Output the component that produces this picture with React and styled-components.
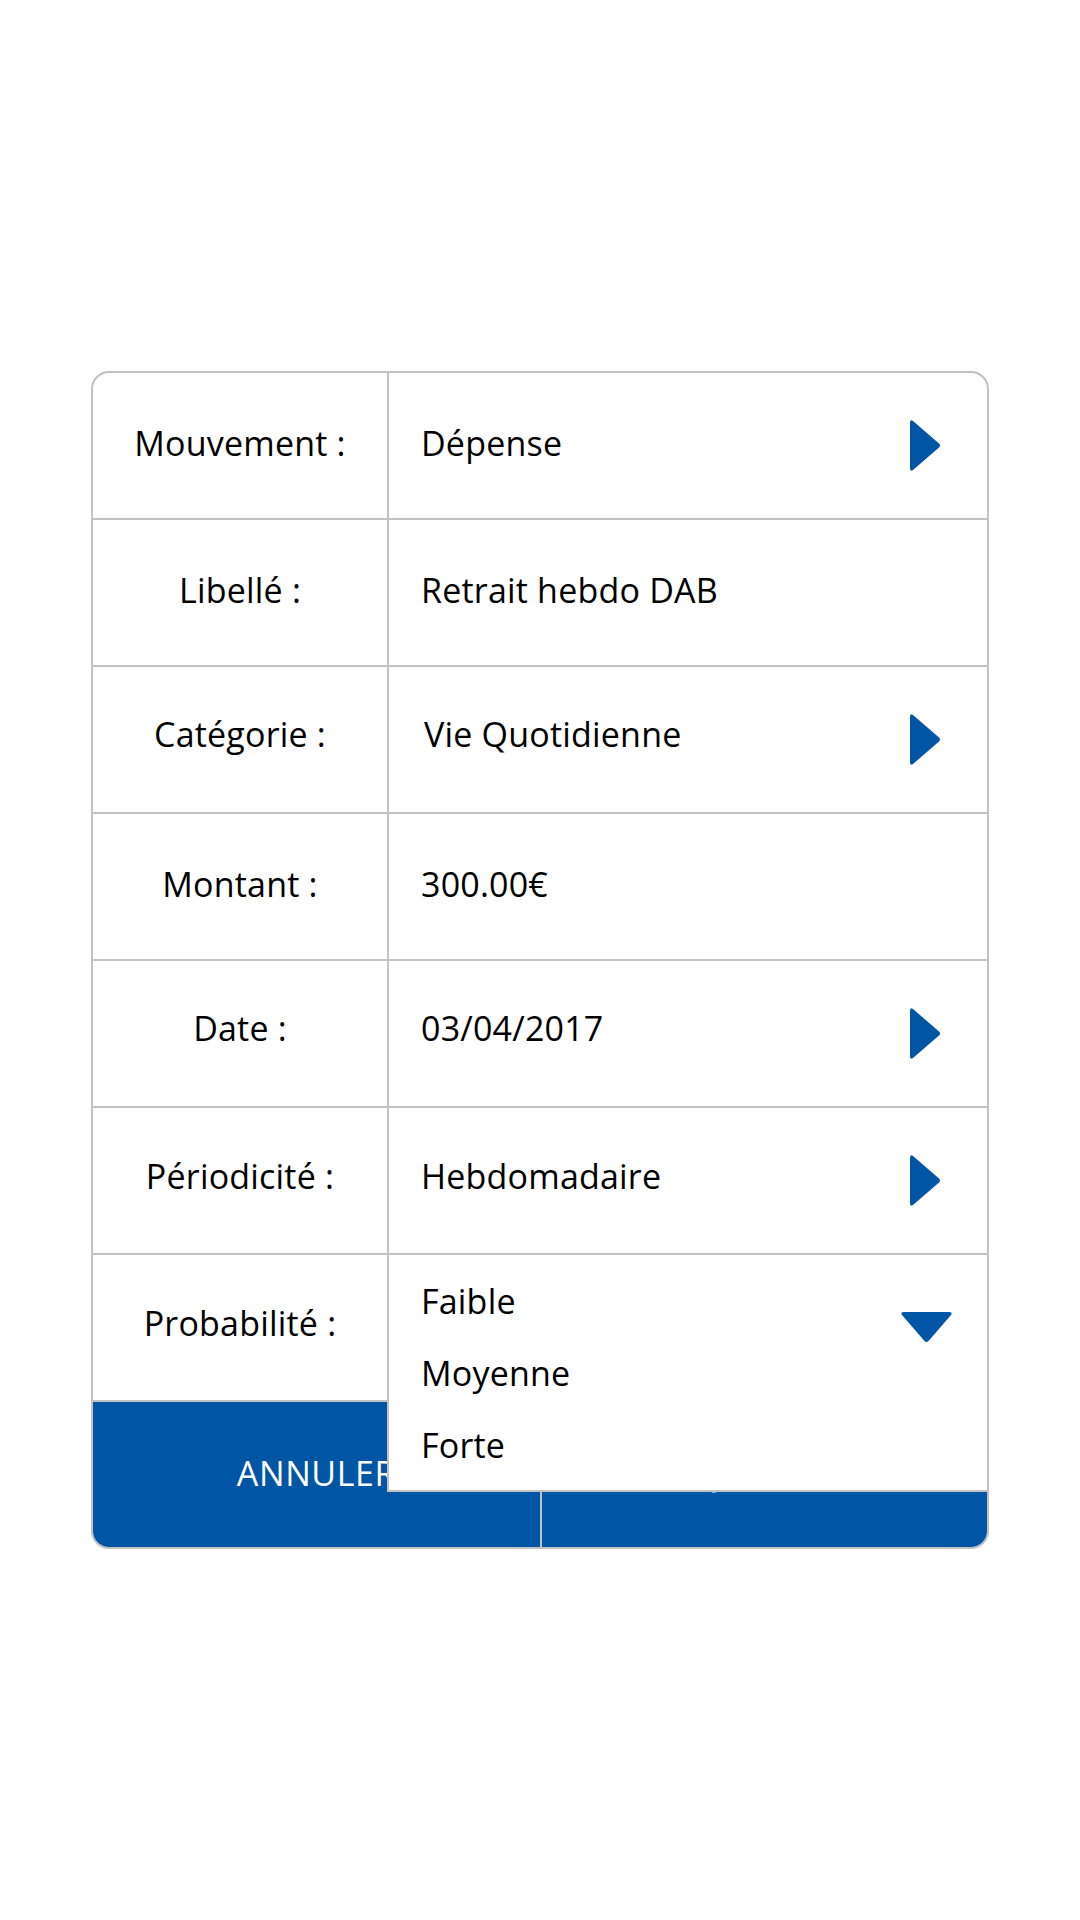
import React from "react";
import styled, { createGlobalStyle } from "styled-components";

const Global = createGlobalStyle`
  html, body { margin: 0; padding: 0; background: #ffffff; }
  body { font-family: "Open Sans", "Noto Sans", sans-serif; color: #000; }
`;

const Page = styled.div`
  width: 1080px;
  height: 1920px;
  padding-top: 371px;
  box-sizing: border-box;
`;

const Card = styled.div`
  margin-left: 91px;
  width: 898px;
  border: 2px solid #c2c2c2;
  border-radius: 18px;
  box-sizing: border-box;
  background: #fff;
`;

const Row = styled.div`
  display: grid;
  grid-template-columns: 294px 1fr;
  height: 147px;
  border-bottom: 2px solid #c2c2c2;
  box-sizing: border-box;
`;

const Label = styled.div`
  display: flex;
  align-items: center;
  justify-content: center;
  font-size: 34px;
  letter-spacing: 0.2px;
  padding-bottom: ${(p) => p.$lift ?? 6}px;
`;

const Value = styled.div`
  position: relative;
  border-left: 2px solid #c2c2c2;
  display: flex;
  align-items: center;
  justify-content: space-between;
  padding-left: ${(p) => p.$indent || 32}px;
  padding-right: 46px;
  font-size: 34px;
  letter-spacing: 0.2px;
`;

const ValueText = styled.span`
  padding-bottom: ${(p) => p.$lift ?? 6}px;
`;

const Dropdown = styled.div`
  position: absolute;
  left: -2px;
  top: -2px;
  right: -2px;
  height: 239px;
  border: 2px solid #c2c2c2;
  box-sizing: border-box;
  background: #fff;
  display: flex;
  justify-content: space-between;
  padding: 10px 34px 0 32px;
`;

const Options = styled.div`
  display: flex;
  flex-direction: column;
`;

const Option = styled.div`
  font-size: 34px;
  letter-spacing: 0.2px;
  height: 72px;
  line-height: 72px;
`;

const DownIcon = styled.svg`
  margin-top: 47px;
`;

const Buttons = styled.div`
  display: grid;
  grid-template-columns: 1fr 1fr;
  height: 145px;
`;

const Button = styled.div`
  background: #0055a5;
  color: #fff;
  display: flex;
  align-items: center;
  justify-content: center;
  font-size: 34px;
  letter-spacing: 0.6px;
  padding-bottom: 4px;
  box-sizing: border-box;
  border-left: ${(p) => (p.$divider ? "2px solid #c2c2c2" : "none")};
  border-bottom-left-radius: ${(p) => (p.$first ? "16px" : "0")};
  border-bottom-right-radius: ${(p) => (p.$last ? "16px" : "0")};
`;

const RightArrow = () => (
  <svg width="31" height="53" viewBox="0 0 31 53">
    <path
      d="M3 2 Q0 0 0 4 L0 49 Q0 53 3 51 L29 28.5 Q31 26.5 29 24.5 Z"
      fill="#0055a5"
    />
  </svg>
);

const DownArrow = () => (
  <DownIcon width="53" height="31" viewBox="0 0 53 31">
    <path
      d="M2 3 Q0 0 4 0 L49 0 Q53 0 51 3 L28.5 29 Q26.5 31 24.5 29 Z"
      fill="#0055a5"
    />
  </DownIcon>
);

const rows = [
  { label: "Mouvement :", value: "Dépense", arrow: true },
  { label: "Libellé :", value: "Retrait hebdo DAB" },
  { label: "Catégorie :", value: "Vie Quotidienne", arrow: true, indent: 35, lift: 12 },
  { label: "Montant :", value: "300.00€" },
  { label: "Date :", value: "03/04/2017", arrow: true, lift: 12 },
  { label: "Périodicité :", value: "Hebdomadaire", arrow: true, lift: 10 },
];

export default function App() {
  return (
    <>
      <Global />
      <Page>
        <Card>
          {rows.map((r) => (
            <Row key={r.label}>
              <Label $lift={r.lift}>{r.label}</Label>
              <Value $indent={r.indent}>
                <ValueText $lift={r.lift}>{r.value}</ValueText>
                {r.arrow && <RightArrow />}
              </Value>
            </Row>
          ))}
          <Row>
            <Label $lift={10}>Probabilité :</Label>
            <Value>
              <Dropdown>
                <Options>
                  <Option>Faible</Option>
                  <Option>Moyenne</Option>
                  <Option>Forte</Option>
                </Options>
                <DownArrow />
              </Dropdown>
            </Value>
          </Row>
          <Buttons>
            <Button $first>ANNULER</Button>
            <Button $divider $last>AJOUTER</Button>
          </Buttons>
        </Card>
      </Page>
    </>
  );
}
